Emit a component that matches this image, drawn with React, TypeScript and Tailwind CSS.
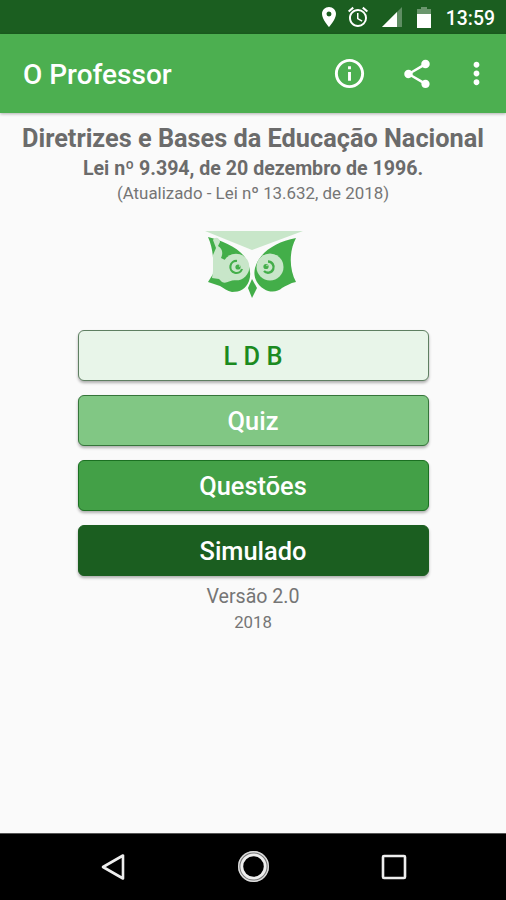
import { MdAccessAlarm, MdInfoOutline, MdMoreVert, MdPlace, MdShare } from 'react-icons/md'

const BUTTONS = [
  { label: 'L D B', className: 'bg-[#e8f5e9] border-[#5f7f62] text-[#1b8a20]' },
  { label: 'Quiz', className: 'bg-[#81c784] border-[#35753a] text-white' },
  { label: 'Questões', className: 'bg-[#43a047] border-[#1b7022] text-white' },
  { label: 'Simulado', className: 'bg-[#1b5e20] border-[#1b5e20] text-white' },
]

function StatusBar() {
  return (
    <div className="flex h-[34px] items-center justify-end bg-[#1b5e20] pr-[11px] text-white">
      <MdPlace size={24} className="mr-[5px]" />
      <MdAccessAlarm size={24} className="mr-[12px]" />
      <svg width="20" height="20" viewBox="0 0 20 20" className="mr-[15px]">
        <path d="M0 20L20 0V20Z" fill="#fff" opacity="0.3" />
        <path d="M0 20L15 5V20Z" fill="#fff" />
      </svg>
      <svg width="14" height="21" viewBox="0 0 14 21" className="mr-[15px]">
        <path d="M4 0H10V2H14V7H0V2H4Z" fill="#fff" opacity="0.35" />
        <path d="M0 7H14V21H0Z" fill="#fff" />
      </svg>
      <span className="pt-[3px] text-[19.4px] leading-none font-medium">13:59</span>
    </div>
  )
}

function AppBar() {
  return (
    <header className="relative flex h-[79px] items-center bg-[#4caf50] pr-[12px] pl-[23px] text-white shadow-[0_1px_3px_rgba(0,0,0,0.3)]">
      <h1 className="flex-1 pt-[3px] text-[28px] leading-none font-medium">O Professor</h1>
      <MdInfoOutline size={35} className="mr-[33px]" />
      <MdShare size={34} className="mr-[25px]" />
      <MdMoreVert size={35} />
    </header>
  )
}

function OwlLogo() {
  return (
    <svg width="100" height="70" viewBox="0 0 100 70" className="mt-[28px]">
      {/* wings */}
      <path d="M5 6C17 9 33 15 41 25C46 32 49 42 46 50C43 58 37 61 29 61C24 60 21 57 17 55L5 51L10 43C11 30 10 17 5 6Z" fill="#43ae49" />
      <path d="M93 7C86 20 86 38 93 51C87 52 83 55 79 57C75 61 67 62 61 58C53 53 50 45 52 37C56 22 72 11 93 7Z" fill="#43ae49" />
      {/* hat */}
      <path d="M2 0H100L49 19Z" fill="#c8e6c9" />
      {/* reader */}
      <path d="M10 9C12 5 17 7 17 11L15 15C20 18 20 23 18 27L22 29L33 44L31 49C26 50 23 53 19 51L16 48L9 47L10 40L10 24L13 17Z" fill="#c8e6c9" />
      <circle cx="33" cy="36" r="13.3" fill="#c8e6c9" />
      <circle cx="67" cy="36" r="13.5" fill="#c8e6c9" />
      {/* eyes */}
      <path d="M34 30A6 6 0 1 0 39 38" stroke="#43ae49" strokeWidth="2.2" fill="none" />
      <circle cx="35" cy="36" r="2.6" fill="#43ae49" />
      <path d="M65 30.5A5.6 5.6 0 1 1 61 40" stroke="#43ae49" strokeWidth="2.4" fill="none" />
      <circle cx="63" cy="35.5" r="2.6" fill="#43ae49" />
      <circle cx="36.5" cy="35" r="0.7" fill="#c8e6c9" />
      <circle cx="64" cy="34.5" r="0.7" fill="#c8e6c9" />
      {/* beak */}
      <path d="M49 48L54 57L49 67L45 57Z" fill="#43ae49" />
    </svg>
  )
}

function NavBar() {
  return (
    <nav className="flex h-[67px] items-center justify-between border-t border-[#555] bg-black pr-[99px] pl-[100px]">
      <svg width="28" height="30" viewBox="0 0 28 30" fill="none" stroke="#eee" strokeWidth="2.6" strokeLinejoin="round">
        <path d="M23 3.5V26.5L3 15Z" />
      </svg>
      <svg width="34" height="34" viewBox="0 0 34 34" fill="none">
        <circle cx="15.5" cy="16.5" r="13.5" stroke="#777" strokeWidth="4" />
        <circle cx="15.5" cy="16.5" r="14.8" stroke="#ddd" strokeWidth="1.4" />
        <circle cx="15.5" cy="16.5" r="11.7" stroke="#eee" strokeWidth="2.8" />
      </svg>
      <svg width="26" height="26" viewBox="0 0 26 26" fill="none" stroke="#eee" strokeWidth="2.6">
        <rect x="2" y="2" width="22" height="22" rx="1" />
      </svg>
    </nav>
  )
}

export default function App() {
  return (
    <div className="flex h-[900px] w-[506px] flex-col bg-[#fafafa] font-['Roboto',sans-serif]">
      <StatusBar />
      <AppBar />
      <main className="flex flex-1 flex-col items-center pt-[11px] text-[#6b6b6b]">
        <h2 className="text-[25.3px] leading-[30px] font-bold whitespace-nowrap">Diretrizes e Bases da Educação Nacional</h2>
        <p className="text-[19.6px] leading-[30px] font-bold">Lei nº 9.394, de 20 dezembro de 1996.</p>
        <p className="text-[16.9px] leading-[19px] text-[#757575]">(Atualizado - Lei nº 13.632, de 2018)</p>
        <OwlLogo />
        <div className="mt-[29px] flex w-[351px] flex-col gap-[14px]">
          {BUTTONS.map((b) => (
            <button
              key={b.label}
              className={`h-[51px] rounded-[6px] border pt-[3px] text-[25.4px] leading-none font-medium shadow-[0_2px_3px_rgba(0,0,0,0.3)] ${b.className}`}
            >
              {b.label}
            </button>
          ))}
        </div>
        <p className="mt-[8px] text-[19.6px] leading-[26px] text-[#757575]">Versão 2.0</p>
        <p className="text-[16.8px] leading-[24px] text-[#757575]">2018</p>
      </main>
      <NavBar />
    </div>
  )
}
